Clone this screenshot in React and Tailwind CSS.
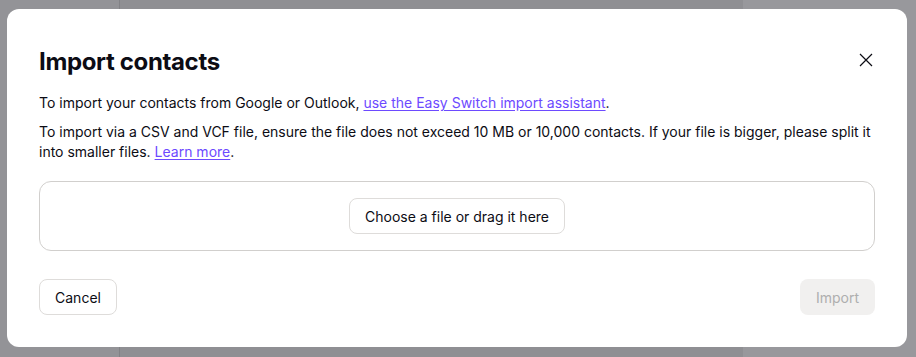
export default function App() {
  return (
    <div
      className="relative w-[916px] h-[357px] overflow-hidden bg-[#949498] flex"
      style={{ fontFamily: "Inter, 'Noto Sans', sans-serif" }}
    >
      <div className="w-[120px] h-full border-r border-[#828286] bg-[#939397]" />
      <div className="w-[623px] h-full bg-[#8f8f93]" />
      <div className="flex-1 h-full bg-[#98989c]" />
      <div className="absolute left-[7px] top-[9px] w-[900px] h-[338px] bg-white rounded-[12px] px-8 pt-[38px] text-[#0c0c14]">
        <div className="flex items-start justify-between">
          <h1 className="text-[24px] leading-[30px] font-bold tracking-[-0.35px]">Import contacts</h1>
          <button className="mt-[5px] mr-[1px] w-[16px] h-[16px] flex items-center justify-center">
            <svg width="14" height="14" viewBox="0 0 14 14" fill="none" stroke="#0c0c14" strokeWidth="1.2">
              <path d="M1 1L13 13M13 1L1 13" />
            </svg>
          </button>
        </div>
        <p className="mt-[16px] text-[14px] leading-[20px]">
          To import your contacts from Google or Outlook,{" "}
          <a className="text-[#6d4aff] underline underline-offset-2">use the Easy Switch import assistant</a>.
        </p>
        <p className="mt-[9px] text-[14px] leading-[20px]">
          To import via a CSV and VCF file, ensure the file does not exceed 10 MB or 10,000 contacts. If your file is bigger, please split it into smaller files.{" "}
          <a className="text-[#6d4aff] underline underline-offset-2">Learn more</a>.
        </p>
        <div className="mt-[19px] h-[70px] border border-[#d1cfcd] rounded-[12px] flex items-center justify-center">
          <button className="h-[36px] px-[15px] border border-[#dedcda] rounded-[8px] text-[14px]">
            Choose a file or drag it here
          </button>
        </div>
        <div className="mt-[28px] flex justify-between">
          <button className="h-[36px] w-[78px] border border-[#dedcda] rounded-[8px] text-[14px]">Cancel</button>
          <button className="h-[36px] w-[75px] bg-[#f1f0ef] rounded-[8px] text-[14px] text-[#aeaeae]">Import</button>
        </div>
      </div>
    </div>
  );
}
